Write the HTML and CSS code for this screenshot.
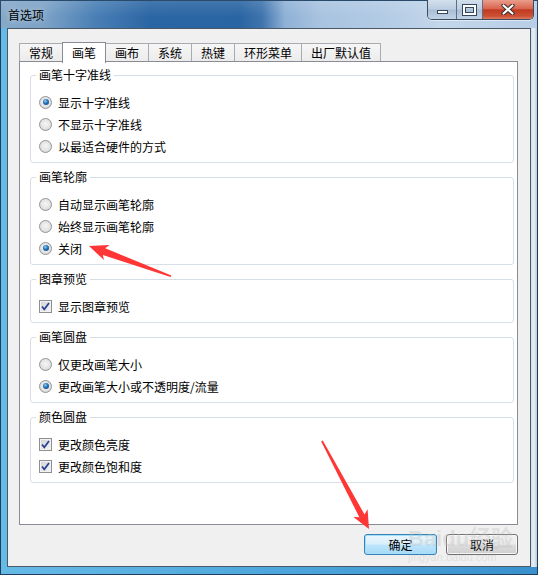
FILE: index.html
```html
<!DOCTYPE html>
<html lang="zh-CN">
<head>
<meta charset="utf-8">
<title>首选项</title>
<link rel="stylesheet" href="styles.css">
</head>
<body>
<div class="window">
  <div class="titlebar">
    <span class="title">首选项</span>
    <div class="caption">
      <div class="cbtn cbtn-min"><span class="glyph-min"></span></div>
      <div class="cbtn cbtn-max"><span class="glyph-max"></span></div>
      <div class="cbtn cbtn-close">
        <svg class="glyph-close" width="14" height="11" viewBox="0 0 14 11">
          <path d="M2.5 1.5 L11.5 9.5 M11.5 1.5 L2.5 9.5" stroke="#3b2a2a" stroke-width="4.2" stroke-linecap="round"/>
          <path d="M2.5 1.5 L11.5 9.5 M11.5 1.5 L2.5 9.5" stroke="#ffffff" stroke-width="2.2" stroke-linecap="round"/>
        </svg>
      </div>
    </div>
  </div>
  <div class="frame">
    <div class="client">
      <div class="tabs">
        <div class="tab">常规</div>
        <div class="tab active">画笔</div>
        <div class="tab">画布</div>
        <div class="tab">系统</div>
        <div class="tab">热键</div>
        <div class="tab">环形菜单</div>
        <div class="tab">出厂默认值</div>
      </div>
      <div class="panel">
        <fieldset class="group">
          <legend>画笔十字准线</legend>
          <div class="row"><span class="radio checked"></span>显示十字准线</div>
          <div class="row"><span class="radio"></span>不显示十字准线</div>
          <div class="row"><span class="radio"></span>以最适合硬件的方式</div>
        </fieldset>
        <fieldset class="group">
          <legend>画笔轮廓</legend>
          <div class="row"><span class="radio"></span>自动显示画笔轮廓</div>
          <div class="row"><span class="radio"></span>始终显示画笔轮廓</div>
          <div class="row"><span class="radio checked"></span>关闭</div>
        </fieldset>
        <fieldset class="group">
          <legend>图章预览</legend>
          <div class="row"><span class="check"><svg width="11" height="11" viewBox="0 0 11 11"><path d="M2 5.5 L4.3 8.3 L9 2" fill="none" stroke="#2a3f93" stroke-width="1.7"/></svg></span>显示图章预览</div>
        </fieldset>
        <fieldset class="group">
          <legend>画笔圆盘</legend>
          <div class="row"><span class="radio"></span>仅更改画笔大小</div>
          <div class="row"><span class="radio checked"></span>更改画笔大小或不透明度/流量</div>
        </fieldset>
        <fieldset class="group">
          <legend>颜色圆盘</legend>
          <div class="row"><span class="check"><svg width="11" height="11" viewBox="0 0 11 11"><path d="M2 5.5 L4.3 8.3 L9 2" fill="none" stroke="#2a3f93" stroke-width="1.7"/></svg></span>更改颜色亮度</div>
          <div class="row"><span class="check"><svg width="11" height="11" viewBox="0 0 11 11"><path d="M2 5.5 L4.3 8.3 L9 2" fill="none" stroke="#2a3f93" stroke-width="1.7"/></svg></span>更改颜色饱和度</div>
        </fieldset>
      </div>
      <div class="buttons">
        <button class="btn btn-default">确定</button>
        <button class="btn btn-cancel">取消</button>
      </div>
    </div>
  </div>
  <div class="watermark">
    <span class="wm-big">Baidu经验</span>
    <span class="wm-small">jingyan.baidu.com</span>
  </div>
  <svg class="annot" width="538" height="575" viewBox="0 0 538 575">
    <polygon fill="#ff3636" points="89,246 109.6,245.1 105.2,248.3 171.4,275.4 170.6,276.9 102.8,254.9 104,260.1"/>
    <polygon fill="#ff3636" points="369,529 367.6,509.3 364.5,514.4 322.8,440.6 321.2,441.4 359.3,517.2 353.4,516.9"/>
  </svg>
</div>
</body>
</html>
```
FILE: styles.css
```css
* { box-sizing: border-box; }
html, body { margin: 0; padding: 0; }
body {
  width: 538px;
  height: 575px;
  overflow: hidden;
  font-family: "Noto Sans CJK SC", "Noto Sans", sans-serif;
  font-size: 12px;
  color: #000;
  background: #fff;
}

.window {
  position: relative;
  width: 538px;
  height: 575px;
  display: flex;
  flex-direction: column;
  background: #4aa3da;
}

/* ---------- title bar ---------- */
.titlebar {
  height: 28px;
  flex: none;
  display: flex;
  align-items: flex-start;
  padding: 0 4px 0 8px;
  background:
    linear-gradient(to bottom, rgba(255,255,255,0.12), rgba(255,255,255,0) 60%),
    linear-gradient(to right, #86a9ca 0px, #7ca2c6 45px, #4a7fb5 95px, #2b66a4 150px, #2a65a3 240px, #3e74ad 262px, #8fb1d6 285px, #a8c3e0 320px, #b4cce5 390px, #c3d6ea 440px, #b8cee6 538px);
  box-shadow: inset 0 1px 0 #2a4a6c, inset 1px 0 0 #2a4a6c, inset -1px 0 0 #2a4a6c;
}
.title {
  line-height: 29px;
  text-shadow: 0 0 6px rgba(255,255,255,0.6);
}
.caption {
  margin-left: auto;
  display: flex;
  height: 20px;
  border: 1px solid #3c4d62;
  border-top: 0;
  border-radius: 0 0 5px 5px;
  overflow: hidden;
  box-shadow: 0 1px 0 rgba(255,255,255,0.5);
}
.cbtn {
  height: 19px;
  display: flex;
  align-items: center;
  justify-content: center;
}
.cbtn-min {
  width: 29px;
  background: linear-gradient(to bottom, #d3dfec, #bccee2 48%, #a9bdd3 52%, #c0d2e5);
  border-right: 1px solid #5d7088;
}
.cbtn-max {
  width: 26px;
  background: linear-gradient(to bottom, #d3dfec, #bccee2 48%, #a9bdd3 52%, #c0d2e5);
  border-right: 1px solid #5d7088;
}
.cbtn-close {
  width: 50px;
  background: linear-gradient(to bottom, #e99d8c, #d9654e 45%, #c13a22 52%, #cc5034 85%, #de7b61);
}
.glyph-min {
  width: 11px;
  height: 4px;
  margin-top: 5px;
  background: #fff;
  border: 1px solid #34475e;
}
.glyph-max {
  width: 13px;
  height: 10px;
  border: 2px solid #fff;
  box-shadow: 0 0 0 1px #34475e, inset 0 0 0 1px #34475e;
  margin-top: 1px;
}
.glyph-close { display: block; }

/* ---------- frame ---------- */
.frame {
  flex: 1;
  display: flex;
  padding: 0 7px 8px 7px;
  background:
    linear-gradient(to right, transparent 531px, #d3e0ec 531px, #e7eef5 534px, #b9c9d8 537px) top left / 100% calc(100% - 8px) no-repeat,
    linear-gradient(to right, #66bae6, #4ea7dc 50%, #3a90cc);
  box-shadow: inset 1px 0 0 #1f3d5c, inset -1px 0 0 #1f3d5c, inset 0 -1px 0 #1f3d5c;
}
.client {
  flex: 1;
  display: flex;
  flex-direction: column;
  background: #f0f0f0;
  border: 1px solid #4b5868;
  padding: 13px 12px 0 11px;
}

/* ---------- tabs ---------- */
.tabs {
  display: flex;
  align-items: flex-end;
  height: 20px;
}
.tab {
  height: 19px;
  line-height: 17px;
  padding: 0 9px;
  border: 1px solid #a8abb0;
  border-bottom: 0;
  background: linear-gradient(to bottom, #f6f6f6, #ebebeb);
  white-space: nowrap;
}
.tab + .tab { margin-left: -1px; }
.tab.active {
  position: relative;
  z-index: 1;
  height: 21px;
  line-height: 19px;
  background: #fff;
  border-color: #898c95;
  margin-bottom: -1px;
}

/* ---------- panel ---------- */
.panel {
  margin-top: -1px;
  height: 464px;
  border: 1px solid #898c95;
  background: #fff;
  padding: 6px 3px 0 10px;
  display: flex;
  flex-direction: column;
  gap: 7px;
}
.group {
  margin: 0;
  min-width: 0;
  padding: 9px 8px 5px 8px;
  border: 1px solid #d5dfe5;
  border-radius: 3px;
}
.group legend {
  padding: 0 3px;
  margin-left: -3px;
  line-height: 14px;
  font-size: 12px;
}
.row {
  height: 22px;
  display: flex;
  align-items: center;
  gap: 6px;
  white-space: nowrap;
}

.radio {
  flex: none;
  position: relative;
  width: 13px;
  height: 13px;
  border-radius: 50%;
  border: 1px solid #939393;
  background: radial-gradient(circle at 50% 45%, #f6f6f6 0, #e3e3e3 55%, #cdcdcd 100%);
}
.radio.checked::after {
  content: "";
  position: absolute;
  left: 2.5px;
  top: 2.5px;
  width: 6px;
  height: 6px;
  border-radius: 50%;
  background: radial-gradient(circle at 40% 35%, #8fd0f2 0, #236fb5 45%, #0f3f7c 100%);
}

.check {
  flex: none;
  width: 13px;
  height: 13px;
  border: 1px solid #8f8f8f;
  background: linear-gradient(135deg, #cfd3d7, #f4f4f4);
  box-shadow: inset 0 0 0 1px #f2f2f2;
  display: flex;
  align-items: center;
  justify-content: center;
}
.check svg { display: block; }

/* ---------- buttons ---------- */
.buttons {
  display: flex;
  justify-content: flex-end;
  gap: 9px;
  margin-top: 9px;
}
.btn {
  height: 21px;
  padding: 0;
  font-family: inherit;
  font-size: 12px;
  color: #000;
  border-radius: 3px;
  border: 1px solid #707070;
  background: linear-gradient(to bottom, #f2f2f2, #ebebeb 48%, #dddddd 52%, #cfcfcf);
  box-shadow: inset 0 0 0 1px rgba(255,255,255,0.8);
}
.btn-default {
  width: 73px;
  border-color: #3c7fb1;
  background: linear-gradient(to bottom, #eaf6fd, #d9f0fc 48%, #bee6fd 52%, #a7d9f5);
  box-shadow: inset 0 0 0 1px #9fe0ff;
}
.btn-cancel { width: 72px; }

/* ---------- overlays ---------- */
.watermark {
  position: absolute;
  left: 408px;
  top: 527px;
  display: flex;
  flex-direction: column;
  align-items: flex-start;
  pointer-events: none;
  color: rgba(190, 190, 190, 0.35);
  font-family: "Liberation Sans", sans-serif;
}
.wm-big { font-size: 22px; font-weight: bold; line-height: 24px; }
.wm-small { font-size: 11px; line-height: 12px; }

.annot {
  position: absolute;
  left: 0;
  top: 0;
  pointer-events: none;
}
```
